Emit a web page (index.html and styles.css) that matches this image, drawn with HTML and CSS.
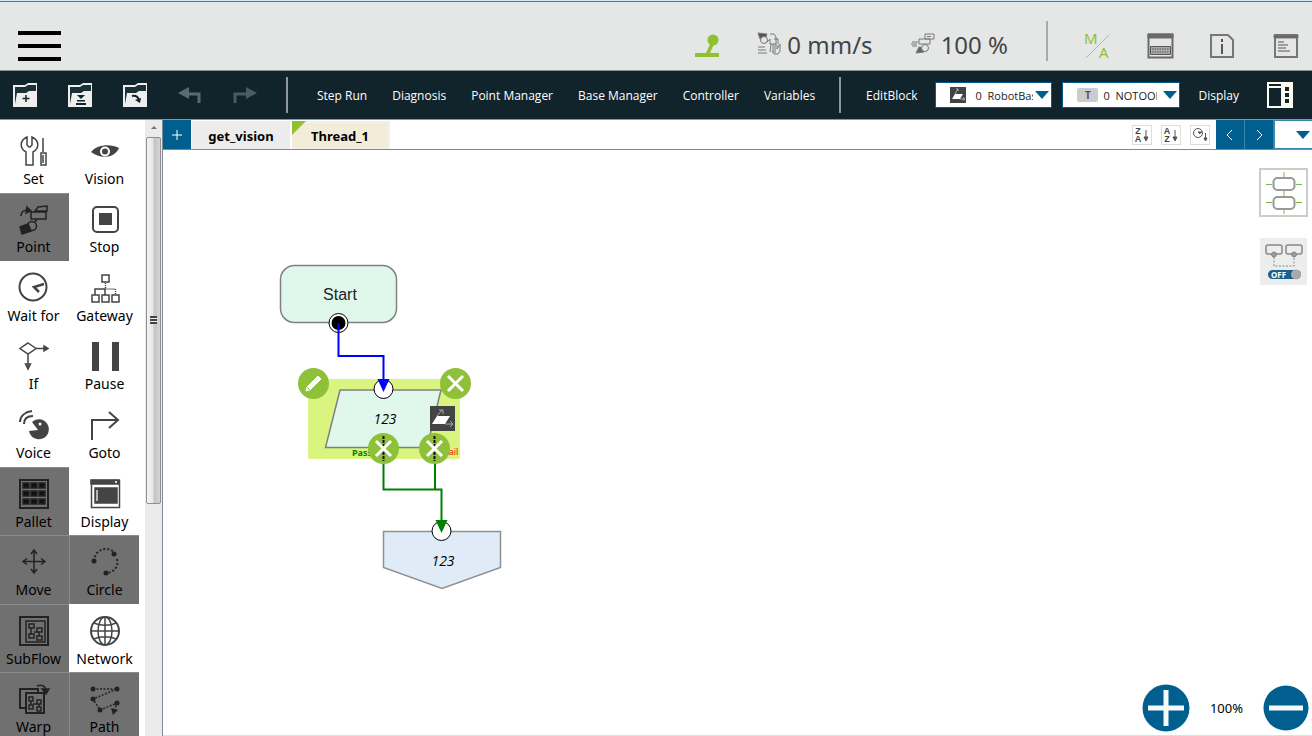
FILE: index.html
```html
<!DOCTYPE html>
<html lang="en">
<head>
<meta charset="utf-8">
<title>Flow editor</title>
<link rel="stylesheet" href="styles.css">
</head>
<body>
<div class="app">
  <header class="status">
    <button class="bare menu" aria-label="Menu"><span></span><span></span><span></span></button>
    <svg class="joystick" width="26" height="26" viewBox="0 0 26 26" fill="#8fc12f"><circle cx="18" cy="8" r="5.500"/><path d="M16 10l3 2-4 9h-4z"/><path d="M0 21h24v4H0z"/></svg>
    <div class="reading">
      <svg width="26" height="26" viewBox="0 0 26 26" fill="none" stroke="#777"><path d="M1 1l9 1-2 6-5-1z" fill="#555"/><circle cx="7" cy="8" r="3.500" fill="#e5e7e6"/><path d="M13 2h4l2 3v7h-6V7l-3 3M14 12l-1 8M16 12v8M17 7h4v5M1 15h7M1 18h8M1 21h9M18 21v-7c0-2 2-2 2 0v3l3-5v7l-2 3h-4l-2-3"/></svg>
      <span>0 mm/s</span>
    </div>
    <div class="reading speed">
      <svg width="26" height="26" viewBox="0 0 26 26" fill="none" stroke="#777"><path d="M14 2h9v5h-9zM8 7h11v5H8z"/><path d="M16 4.500h4M5 21l3-6 6 1-1 4z" fill="#666"/><circle cx="14" cy="16" r="3.500" fill="#e5e7e6"/><path d="M1 10h6M0 12h6M1 14h5"/></svg>
      <span>100 %</span>
    </div>
    <span class="rule tall"></span>
    <div class="status-tools">
      <button class="bare" aria-label="Manual or auto"><svg width="27" height="28" viewBox="0 0 27 28"><g fill="#8fc12f" class="ma"><text x="0" y="13">M</text><text x="15" y="27">A</text></g><path d="M25 4L2 27" stroke="#a5cc62"/></svg></button>
      <button class="bare" aria-label="Keyboard"><svg width="27" height="28" viewBox="0 0 27 28" fill="none" stroke="#6a6a6a"><path d="M1.500 3.500h24v23h-24z" stroke-width="2"/><path d="M1 3h25v4H1z" fill="#6a6a6a"/><path d="M3.500 15.500h20v8h-20z" fill="#aaa" stroke="#555"/><path d="M5 18h17M5 21h17" stroke="#555" stroke-dasharray="1.500 1"/></svg></button>
      <button class="bare" aria-label="Information"><svg width="26" height="28" viewBox="0 0 26 28" fill="none" stroke="#777" stroke-width="2"><path d="M1 4h17l5 5v17H1z"/><path d="M12 13v10M12 8v3" stroke="#555"/></svg></button>
      <button class="bare" aria-label="Log"><svg width="26" height="28" viewBox="0 0 26 28" fill="none" stroke="#777"><path d="M3 4h22v22H3z" stroke-width="2"/><path d="M2 4h24v3H2z" fill="#666"/><path d="M6 11h6M6 14h10M6 17h8M6 20h12" stroke="#555"/></svg></button>
    </div>
  </header>

  <nav class="toolbar">
    <div class="files">
      <button class="bare" aria-label="New"><svg width="26" height="26" viewBox="0 0 26 26"><path d="M1 25V3h12l3-2h9v24z" fill="#eee"/><path d="M3 22V5h10l3-2h8v6h-7l-3 2H5z" fill="#1b3037"/><path d="M14 13v7M10.500 16.500h7" stroke="#11242b" stroke-width="1.500"/></svg></button>
      <button class="bare" aria-label="Save"><svg width="26" height="26" viewBox="0 0 26 26"><path d="M1 25V3h12l3-2h9v24z" fill="#eee"/><path d="M3 22V5h10l3-2h8v6h-7l-3 2H5z" fill="#1b3037"/><path d="M10 13h8l-4 4zM10 18h8v1.500h-8zM9 21h10v2H9z" fill="#11242b"/></svg></button>
      <button class="bare" aria-label="Open"><svg width="26" height="26" viewBox="0 0 26 26"><path d="M1 25V3h12l3-2h9v24z" fill="#eee"/><path d="M3 22V5h10l3-2h8v6h-7l-3 2H5z" fill="#1b3037"/><path d="M10 14c4-1 6 1 7 4" fill="none" stroke="#11242b" stroke-width="2"/><path d="M13 18l6-2-1 5z" fill="#11242b"/></svg></button>
      <button class="bare" aria-label="Undo"><svg width="26" height="26" viewBox="0 0 26 26" fill="none"><path d="M6 12h16v9" stroke="#5c6a6e" stroke-width="3"/><path d="M1 11l11-6v12z" fill="#5c6a6e"/></svg></button>
      <button class="bare" aria-label="Redo"><svg width="26" height="26" viewBox="0 0 26 26" fill="none"><path d="M20 12H3v9" stroke="#4c5b5f" stroke-width="3"/><path d="M25 11l-11-6v12z" fill="#4c5b5f"/></svg></button>
    </div>
    <span class="rule"></span>
    <div class="links">
      <a href="#">Step Run</a><a href="#">Diagnosis</a><a href="#">Point Manager</a><a href="#">Base Manager</a><a href="#">Controller</a><a href="#">Variables</a>
    </div>
    <span class="rule"></span>
    <div class="edit">
      <a href="#">EditBlock</a>
      <label class="combo">
        <svg width="16" height="16" viewBox="0 0 16 16"><path d="M0 0h16v16H0z" fill="#444"/><path d="M5 7h8l-3 5H2z" fill="#fff"/><path d="M5 7l3-5M6 2h2v2M10 12h4M13 10.500l2 1.500-2 1.500" stroke="#aaa" fill="none"/></svg>
        <select aria-label="Base"><option>0&nbsp; RobotBase</option></select>
        <i class="arrow"></i>
      </label>
      <label class="combo tool">
        <span class="chip">T</span>
        <select aria-label="Tool"><option>0&nbsp; NOTOOL</option></select>
        <i class="arrow"></i>
      </label>
      <a href="#">Display</a>
      <button class="bare panel-btn" aria-label="Panels"><svg width="26" height="26" viewBox="0 0 26 26"><path d="M0 0h26v26H0z" fill="#fbfbee"/><path d="M2 2h12v2H2zM2 6h12v18H2zM18 5h4v4h-4zM18 11h4v4h-4zM18 17h4v4h-4z" fill="#11242b"/></svg></button>
    </div>
  </nav>

  <main class="work">
    <aside class="palette">
      <button class="tile"><svg viewBox="0 0 30 30"><path d="M8 1C1 4 0 12 7 16v13h7V16c7-4 6-12-1-15v8l-2 2h-1L8 9zM24 2v14M22 17h5v12h-5zM24 19v8"/></svg>Set</button>
      <button class="tile"><svg viewBox="0 0 30 30"><path d="M1 16C8 8 21 8 29 12 24 23 10 23 1 16z" fill="#444" stroke="none"/><circle cx="15" cy="15.500" r="4" stroke="#fff" stroke-width="2" fill="#444"/></svg>Vision</button>
      <button class="tile off"><svg viewBox="0 0 30 30"><path d="M16 7l3-4 9-1v5zM12 8h15v7H12zM2 12c0-5 3-6 7-6M18 15l-2 3" /><path d="M8 3l4 4-5 2z" fill="#222"/><circle cx="13" cy="22" r="4.500"/><path d="M1 23l8-3 3 7-9 3z" fill="#222"/></svg>Point</button>
      <button class="tile"><svg viewBox="0 0 30 30"><rect x="3" y="3" width="25" height="25" rx="4" stroke-width="2"/><path d="M9 9h13v12H9z" fill="#444" stroke="none"/></svg>Stop</button>
      <button class="tile"><svg viewBox="0 0 30 30"><circle cx="14" cy="14" r="13.500" stroke-width="2"/><path d="M25 11l-10 3 5 5" stroke-width="2.500"/></svg>Wait for</button>
      <button class="tile"><svg viewBox="0 0 30 30"><path d="M12 2h7v7h-7zM2 22h7v7H2zM12 22h7v7h-7zM22 22h7v7h-7z" stroke-width="1.500"/><path d="M5 22v-6h10v6" stroke-width="1.500"/><path d="M15.500 10v6h10v6" stroke-dasharray="1 1"/></svg>Gateway</button>
      <button class="tile"><svg viewBox="0 0 30 30"><path d="M9 2l8 5.500L9 13 1 7.500zM17 7.500h12M25 5l4 2.500-4 2.500zM9 13v14M6.500 23L9 28l2.500-5z"/></svg>If</button>
      <button class="tile"><svg viewBox="0 0 30 30"><path d="M2 1h7v29H2zM22 1h7v29h-7z" fill="#444" stroke="none"/></svg>Pause</button>
      <button class="tile"><svg viewBox="0 0 30 30"><path d="M13 12a10 10 0 1 1-3 9l9-1z" fill="#444" stroke="none"/><circle cx="21" cy="14" r="1.500" fill="#fff" stroke="none"/><path d="M1 12C1 6 6 2 13 1M5 14c0-5 3-8 9-8" stroke-width="2"/></svg>Voice</button>
      <button class="tile"><svg viewBox="0 0 30 30"><path d="M2 30V10h26M19 2l9 8-9 8" stroke-width="2"/></svg>Goto</button>
      <button class="tile off"><svg viewBox="0 0 30 30"><path d="M1 1h28v28H1z" stroke-width="2"/><path d="M4 4h6v5H4zM12 4h6v5h-6zM20 4h6v5h-6zM4 12h6v5H4zM12 12h6v5h-6zM20 12h6v5h-6zM4 20h6v5H4zM12 20h6v5h-6zM20 20h6v5h-6z" fill="#111"/></svg>Pallet</button>
      <button class="tile"><svg viewBox="0 0 30 30"><path d="M1.500 1.500h28v27h-28z"/><path d="M1 1h28v4H1zM5 9h22v15H5z" fill="#444"/><path d="M7 11v11" stroke="#ddd"/><path d="M25 2h2v2h-2z" fill="#ddd" stroke="none"/></svg>Display</button>
      <button class="tile off"><svg viewBox="0 0 30 30"><path d="M15 3v23M4 14.500h22M12 7l3-4 3 4M12 22l3 4 3-4M8 11.500l-4 3 4 3M22 11.500l4 3-4 3" stroke-width="1.500"/></svg>Move</button>
      <button class="tile off"><svg viewBox="0 0 30 30"><path d="M4 14A12 12 0 0 1 25 6M27 12c2 7-3 14-11 14" stroke-width="2" stroke-dasharray="2 2"/><g fill="#222" stroke="none"><circle cx="4" cy="14" r="2.500"/><circle cx="24" cy="7" r="2.500"/><circle cx="16" cy="26" r="2.500"/></g></svg>Circle</button>
      <button class="tile off"><svg viewBox="0 0 30 30"><path d="M1 1h28v28H1z" stroke-width="2"/><path d="M7 5h19v21H7zM10 8h5v4h-5zM10 18h5v4h-5zM18 12h5v4h-5zM18 20h5v4h-5zM12 12v6M20 16v4M15 16h3"/></svg>SubFlow</button>
      <button class="tile"><svg viewBox="0 0 30 30"><circle cx="15" cy="15" r="14" stroke-width="2"/><ellipse cx="15" cy="15" rx="7" ry="14" stroke-width="1.500"/><path d="M15 1v28M1 15h28M4 7c6 3 16 3 22 0M4 23c6-3 16-3 22 0" stroke-width="1.500"/></svg>Network</button>
      <button class="tile off"><svg viewBox="0 0 30 30"><path d="M7 24H1V5h18v4M7 9h18v20H7z" stroke-width="2"/><path d="M10 13h4v4h-4zM10 21h4v4h-4zM18 16h4v4h-4zM18 23h4v4h-4zM12 17v4M20 20v3M14 20h4M18 2c5-2 8 0 9 4"/><path d="M23 5h7l-3 5z" fill="#222"/></svg>Warp</button>
      <button class="tile off"><svg viewBox="0 0 30 30"><path d="M3 5h24L3 15l7 11 17-7-3 8" stroke-dasharray="2 1.500"/><g fill="#222" stroke="none"><circle cx="3" cy="5" r="2.500"/><circle cx="27" cy="5" r="2.500"/><circle cx="3" cy="15" r="2.500"/><circle cx="10" cy="26" r="2.500"/><circle cx="27" cy="19" r="2.500"/><path d="M21 24l7 2-5 5z"/></g></svg>Path</button>
    </aside>
    <div class="scrollbar"><i class="up"></i><div class="thumb"><i class="grip"></i></div><div class="rest"></div></div>

    <section class="editor">
      <div class="tabs">
        <button class="blue add" aria-label="Add thread"><svg width="12" height="12" viewBox="0 0 12 12" stroke="#fff"><path d="M6 1v10M1 6h10"/></svg></button>
        <button class="tab">get_vision</button>
        <button class="tab current">Thread_1</button>
        <div class="sorts">
          <button class="sort" aria-label="Sort descending"><span><b>Z</b><b>A</b></span><svg width="6" height="16" viewBox="0 0 6 16"><path d="M3 3v9M1 10l2 4 2-4z"/></svg></button>
          <button class="sort" aria-label="Sort ascending"><span><b>A</b><b>Z</b></span><svg width="6" height="16" viewBox="0 0 6 16"><path d="M3 3v9M1 10l2 4 2-4z"/></svg></button>
          <button class="sort" aria-label="Sort by time"><svg width="18" height="18" viewBox="0 0 18 18"><circle cx="7" cy="7" r="4.500" fill="none"/><path d="M11 6H7l2 2M14.500 7v7M13 12l1.500 3 1.500-3z"/></svg></button>
        </div>
        <button class="blue" aria-label="Previous"><svg width="12" height="12" viewBox="0 0 12 12" stroke="#fff" fill="none"><path d="M8 1L3 6l5 5"/></svg></button>
        <button class="blue" aria-label="Next"><svg width="12" height="12" viewBox="0 0 12 12" stroke="#fff" fill="none"><path d="M4 1l5 5-5 5"/></svg></button>
        <button class="list" aria-label="All threads"><i class="arrow"></i></button>
      </div>

      <div class="canvas">
        <svg class="flow" width="400" height="460" viewBox="163 150 400 460">
          <rect x="280.500" y="265.500" width="116" height="57" rx="14" fill="#e0f7ec" stroke="#808080" stroke-width="1.500"/>
          <text class="start" x="340" y="300">Start</text>
          <rect x="308" y="379" width="152" height="80" rx="2" fill="#daf57f"/>
          <path d="M340 390h101l-14 57.500H325.500z" fill="#e0f7ec" stroke="#808080" stroke-width="1.500"/>
          <text class="num" x="385" y="424">123</text>
          <path d="M430 406h25v25h-25z" fill="#444"/>
          <path d="M437 416h13l-5 8h-13z" fill="#fff"/><path d="M437 416l5-6M439 410h4v4M445 424h8M450 421l3 3-3 3" fill="none" stroke="#aaa"/>
          <text class="pass" x="352" y="456">Pass</text><text class="fail" x="444" y="455">Fail</text>
          <path d="M383.500 531.500h117v36L442 588.500l-58.500-21z" fill="#e0ebf8" stroke="#909090" stroke-width="1.500"/>
          <text class="num" x="443" y="566">123</text>
          <g fill="#fff" stroke="#000"><circle cx="338.500" cy="323" r="9.500"/><circle cx="383.500" cy="389" r="9.500"/><circle cx="441.500" cy="531" r="9.500"/></g>
          <circle cx="338.500" cy="323" r="7"/>
          <path d="M338.500 323v33h45v25" fill="none" stroke="#00f" stroke-width="2"/><path d="M377.500 379h12l-6 13z" fill="#00f"/>
          <path d="M383.500 460v29.500h58V523M435 460v29.500" fill="none" stroke="#008000" stroke-width="2"/><path d="M435.500 520h12l-6 13z" fill="#008000"/>
        </svg>
        <button class="node-btn at-edit" aria-label="Edit"><svg viewBox="0 0 31 31"><path d="M8 23l1-4L20 8l3 3-11 11z" fill="#fff" stroke="#fff" stroke-linejoin="round"/><path d="M9 19l3 3" stroke="#8fc03a"/></svg></button>
        <button class="node-btn at-close" aria-label="Delete"><svg viewBox="0 0 31 31"><path d="M8 8l15 15M23 8L8 23" stroke="#fff" stroke-width="3"/></svg></button>
        <button class="node-btn at-pass" aria-label="Remove pass link"><svg viewBox="0 0 31 31"><path d="M15.500 3v25" stroke="#111" stroke-width="2" stroke-dasharray="3 1"/><path d="M8 8l15 15M23 8L8 23" stroke="#fff" stroke-width="3"/></svg></button>
        <button class="node-btn at-fail" aria-label="Remove fail link"><svg viewBox="0 0 31 31"><path d="M15.500 3v25" stroke="#111" stroke-width="2" stroke-dasharray="3 1"/><path d="M8 8l15 15M23 8L8 23" stroke="#fff" stroke-width="3"/></svg></button>

        <div class="aids">
          <button class="aid framed" aria-label="Align to grid"><svg width="46" height="46" viewBox="0 0 46 46" fill="none"><path d="M23 2v42" stroke="#7cb93e"/><path d="M5 14.500h36M5 32.500h36" stroke="#7cb93e" stroke-dasharray="6 1 2 1"/><rect x="12.500" y="8" width="21" height="12" rx="4" fill="#fff" stroke="#999" stroke-width="2"/><rect x="12.500" y="27" width="21" height="12" rx="4" fill="#fff" stroke="#999" stroke-width="2"/></svg></button>
          <button class="aid" aria-label="Auto connect"><svg width="46" height="46" viewBox="0 0 46 46" fill="none"><g stroke="#888" stroke-width="1.500"><rect x="5" y="6" width="16" height="9" rx="2"/><rect x="25" y="6" width="16" height="9" rx="2"/></g><path d="M13 18v9h20V18" stroke="#888" stroke-dasharray="2 1.500"/><g fill="#999" stroke="#888"><circle cx="13" cy="15.500" r="2.500"/><circle cx="33" cy="15.500" r="2.500"/></g><rect x="7" y="31" width="33" height="9" rx="4.500" fill="#1b5f8c"/><circle cx="35" cy="35.500" r="5" fill="#aaa"/><text class="off-text" x="10" y="39">OFF</text></svg></button>
        </div>
        <div class="zoom">
          <button class="bare" aria-label="Zoom in"><svg width="48" height="48" viewBox="0 0 48 48"><circle cx="24" cy="24" r="23.500" fill="#005f8f"/><path d="M24 6v36M6 24h36" stroke="#f4f9fc" stroke-width="5"/></svg></button>
          <output>100%</output>
          <button class="bare" aria-label="Zoom out"><svg width="46" height="46" viewBox="0 0 46 46"><circle cx="23" cy="23" r="22.500" fill="#005f8f"/><path d="M6 23h34" stroke="#f4f9fc" stroke-width="5"/></svg></button>
        </div>
      </div>
    </section>
  </main>
</div>
</body>
</html>
```
FILE: styles.css
```css
* { box-sizing: border-box; }
body { margin: 0; font-family: "Noto Sans", "Open Sans", sans-serif; font-size: 12px; color: #000; }
button, select { font: inherit; color: inherit; }
button { padding: 0; border: 0; background: none; display: flex; align-items: center; justify-content: center; }
svg { display: block; flex: none; overflow: visible; }
a { color: inherit; text-decoration: none; }

.app { height: 100vh; display: flex; flex-direction: column; overflow: hidden; }

.status {
  height: 71px; flex: none; display: flex; align-items: center;
  padding: 18px 14px 0 18px; background: #e5e7e6;
  border-top: 1px solid #d3ebf8; border-bottom: 1px solid #8b9699;
  box-shadow: inset 0 1px #56788c;
}
.menu { flex-direction: column; gap: 9px; padding-top: 2px; }
.menu span { width: 43px; height: 4px; background: #000; }
.joystick { margin-left: auto; margin-right: 36px; }
.reading { display: flex; align-items: center; gap: 4px; margin-right: 38px; font-size: 24px; line-height: 32px; color: #444; }
.rule { flex: none; width: 2px; height: 36px; background: #8e989b; }
.rule.tall { height: 40px; margin-bottom: 8px; background: #a9abaa; }
.status-tools { display: flex; gap: 36px; margin-left: 36px; }
.ma { font-size: 15px; }

.toolbar {
  height: 49px; flex: none; display: flex; align-items: center;
  padding: 0 19px 0 12px; background: #11242b; color: #fff;
  border-bottom: 1px solid #8b9699; font-family: "Open Sans", "Noto Sans", sans-serif;
}
.files { display: flex; gap: 29px; margin-right: 28px; }
.links { display: flex; gap: 25px; margin: 0 24px 0 29px; white-space: nowrap; }
.edit { display: flex; align-items: center; margin-left: auto; }
.combo {
  position: relative; display: flex; align-items: center; gap: 9px;
  width: 117px; height: 26px; margin-left: 18px; padding-left: 14px;
  border: 1px solid #005f8f; background: #fff; color: #222; font-size: 11px;
}
.combo.tool { width: 118px; margin: 0 18px 0 10px; gap: 5px; }
.combo select { appearance: none; width: 58px; padding: 0; border: 0; background: none; overflow: hidden; text-overflow: clip; }
.combo.tool select { width: 54px; }
.combo .arrow { position: absolute; right: 2px; top: 8px; }
.arrow { border: 7px solid transparent; border-top: 8px solid #005f8f; border-bottom: 0; }
.chip { width: 21px; height: 14px; border-radius: 2px; background: #ccc; color: #555; font-size: 10px; line-height: 14px; font-weight: bold; text-align: center; }
.panel-btn { margin-left: 28px; }

.work { flex: 1; min-height: 0; display: flex; }
.palette {
  width: 145px; flex: none; overflow: hidden; padding: 4px 6px 0 0;
  display: grid; grid-template-columns: 69px 70px; grid-template-rows: repeat(9, 1fr);
  height: calc(100% + 5px);
}
.tile { flex-direction: column; gap: 3px; padding: 7px 2px 0 0; font-size: 14px; line-height: 20px; border-top: 1px solid transparent; }
.tile:nth-child(even) { padding-right: 0; border-left: 1px solid transparent; }
.tile svg { width: 30px; height: 30px; fill: none; stroke: #444; stroke-width: 1.5px; }
.tile.off { background: #707070; border-color: #8b8b8b; }
.tile.off svg { stroke: #222; }

.scrollbar { width: 18px; flex: none; display: flex; flex-direction: column; background: #ebebeb; border-right: 1px solid #7f8a94; }
.up { margin: 6px auto 8px; border: 3px solid transparent; border-bottom: 3px solid #777; border-top: 0; }
.thumb {
  flex: 366; display: flex; align-items: center; justify-content: center; margin: 0 1px;
  border: 1px solid #8f8f8f; border-radius: 2px; background: linear-gradient(90deg, #f5f5f5, #e6e6e6 45%, #c4c4c8 55%, #d4d4d6);
}
.grip { width: 7px; height: 8px; background: repeating-linear-gradient(#444 0 2px, #eee 2px 3px); }
.rest { flex: 233; }

.editor { flex: 1; min-width: 0; display: flex; flex-direction: column; }
.tabs { height: 30px; flex: none; display: flex; border-bottom: 1px solid #85858f; }
.blue { width: 29px; background: #005f8f; border-right: 1px solid #3b86ab; }
.add { border-right: 0; width: 28px; }
.tab {
  position: relative; width: 98px; margin: 1px 2px 0 1px; background: #ececec;
  font-weight: bold; font-size: 13px; padding-top: 2px;
}
.tab.current { margin-left: 0; background: #f3ecd9; border: 2px solid #f0f0f0; border-left: 0; border-bottom: 1px solid #f0f0f0; padding-top: 0; }
.tab.current::before { content: ""; position: absolute; left: 0; top: -2px; border-top: 14px solid #8fc12f; border-right: 14px solid transparent; }
.sorts { display: flex; align-items: center; gap: 9px; margin: 0 6px 0 auto; }
.sort { width: 20px; height: 20px; gap: 2px; border: 1px solid #ddd; }
.sort span { display: flex; flex-direction: column; }
.sort b { font: bold 9px/8px "Liberation Sans", Arial, sans-serif; color: #444; }
.sort svg { stroke: #555; }
.sort path { fill: #555; }
.list { width: 38px; padding-left: 18px; border: 1px solid #3b86ab; border-right: 0; }

.canvas { flex: 1; min-height: 0; position: relative; background: #fff; border-bottom: 1px solid #e0e0e0; }
.flow { position: absolute; left: 0; top: 0; }
.flow text { text-anchor: middle; }
.flow .start { font: 16px "Liberation Sans", Arial, sans-serif; fill: #222; }
.flow .num { font-family: "Open Sans", sans-serif; font-size: 14px; font-style: italic; }
.flow .pass { font-size: 9px; font-weight: bold; fill: #008000; text-anchor: start; }
.flow .fail { font-size: 9px; fill: #f00; text-anchor: start; }
.node-btn { position: absolute; width: 31px; height: 31px; border-radius: 50%; background: #8fc03a; }
.node-btn svg { width: 31px; height: 31px; }
.at-edit { left: 135px; top: 218px; }
.at-close { left: 277px; top: 218px; }
.at-pass { left: 205px; top: 283px; }
.at-fail { left: 256px; top: 283px; }

.aids { position: absolute; right: 4px; top: 18px; display: flex; flex-direction: column; align-items: center; gap: 21px; }
.aid { width: 47px; height: 47px; background: #ededed; }
.aid.framed { width: 49px; height: 49px; background: #fff; border: 2px solid #ccc; }
.off-text { font-size: 8px; font-weight: bold; fill: #fff; }
.zoom { position: absolute; right: 3px; bottom: 3px; display: flex; align-items: center; gap: 20px; font-size: 13px; }
```
